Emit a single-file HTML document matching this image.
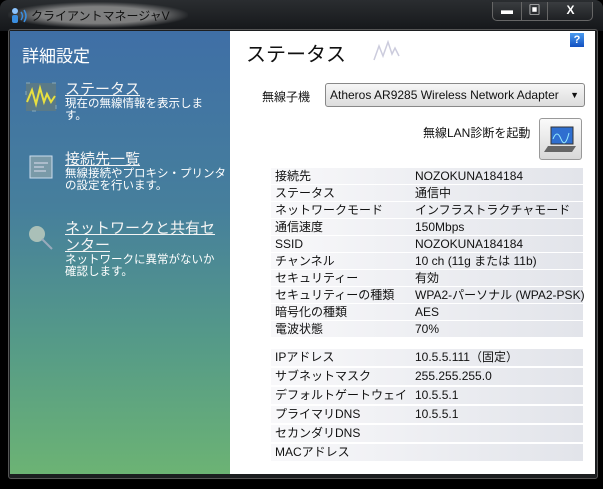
<!DOCTYPE html>
<html><head><meta charset="utf-8"><style>
*{margin:0;padding:0;box-sizing:border-box}
body{width:603px;height:489px;overflow:hidden;background:#000;font-family:"Liberation Sans","Noto Sans CJK JP",sans-serif;position:relative}
.title{position:absolute;left:0;top:0;width:603px;height:31px;background:linear-gradient(#2a2d30,#15171a);border-radius:8px 8px 0 0}
.glow{position:absolute;left:8px;top:2px;width:180px;height:26px;background:radial-gradient(ellipse at center,rgba(150,150,150,.8) 45%,rgba(80,80,80,0) 72%)}
.ttxt{position:absolute;left:31px;top:7px;font-size:12px;color:#111;white-space:nowrap}
.btns{position:absolute;left:492px;top:2px;height:19px;width:101px;border:1px solid #666;border-top:none;border-radius:0 0 5px 5px;background:linear-gradient(#3a3d40,#1e2023)}
.btns div{position:absolute;top:0;height:18px;border-right:1px solid #666;color:#fff;font-size:12px;font-weight:bold;text-align:center;line-height:17px}
.frame{position:absolute;left:8px;top:29px;width:590px;height:450px;border:1px solid #555;border-radius:3px;background:#1c1e20}
.left{position:absolute;left:10px;top:31px;width:220px;height:443px;background:linear-gradient(#3f6fa6 0%,#467f9c 40%,#559a88 70%,#6cb374 100%)}
.right{position:absolute;left:230px;top:31px;width:365px;height:443px;background:#fff}
.h1{position:absolute;color:#fff;font-size:17px;left:22px;top:42px}
.item{position:absolute;color:#fff;left:65px;font-size:11.5px;line-height:12px;white-space:nowrap}
.item .l{font-size:15px;text-decoration:underline;line-height:17px;color:#f4f4f4}
.st{position:absolute;left:246px;top:38px;font-size:20px;color:#111}
.lab{position:absolute;font-size:12px;color:#111}
.sel{position:absolute;left:325px;top:83px;width:260px;height:24px;border:1px solid #888;border-radius:3px;background:linear-gradient(#f6f6f6,#dcdcdc);font-size:12px;line-height:22px;padding-left:4px;color:#111;white-space:nowrap}
.diag{position:absolute;left:539px;top:118px;width:43px;height:42px;border:1px solid #999;border-radius:3px;background:linear-gradient(#fafafa,#d8d8d8)}
.row{position:absolute;left:271px;width:312px;height:16px;background:linear-gradient(90deg,#f8f8fa,#e2e4ea);font-size:12px;line-height:16px;color:#111;white-space:nowrap}
.row span{position:absolute}
.row .a{left:4px}.row .b{left:144px}
</style></head><body>
<div class="title"><div class="glow"></div>
<svg style="position:absolute;left:11px;top:7px" width="18" height="17"><circle cx="4" cy="4" r="3" fill="#8cc4ff"/><rect x="1" y="8" width="6" height="8" rx="2" fill="#3a8ee0"/><path d="M10 5q3 4 0 8M13 3q4 6 0 12" stroke="#3a8ee0" stroke-width="1.5" fill="none"/></svg>
<div class="ttxt">クライアントマネージャV</div>
<div class="btns"><div style="left:0;width:29px">▬</div><div style="left:29px;width:26px">▣</div><div style="left:55px;width:45px;border:none">X</div></div>
</div>
<div class="frame"></div>
<div class="left"></div>
<div class="right"></div>
<div class="h1">詳細設定</div>
<svg style="position:absolute;left:25px;top:82px" width="32" height="30"><rect x="1" y="1" width="30" height="28" fill="#5a7a88" stroke="#8ab" stroke-dasharray="4 22"/><path d="M2 20l5-12 4 14 4-16 4 14 3-8 4 8 4-6" stroke="#e8e040" stroke-width="2" fill="none"/></svg>
<div class="item" style="top:81px"><div class="l">ステータス</div>現在の無線情報を表示しま<br>す。</div>
<svg style="position:absolute;left:25px;top:153px" width="32" height="30"><rect x="5" y="3" width="22" height="22" fill="#7a9aa8" stroke="#cde"/><path d="M9 10h14M9 14h10M9 18h12" stroke="#dde" /></svg>
<div class="item" style="top:151px"><div class="l">接続先一覧</div>無線接続やプロキシ・プリンタ<br>の設定を行います。</div>
<svg style="position:absolute;left:25px;top:222px" width="32" height="32"><circle cx="12" cy="12" r="8" fill="#aac0b8"/><path d="M17 17l10 10" stroke="#9ab" stroke-width="2"/></svg>
<div class="item" style="top:220px"><div class="l">ネットワークと共有セ<br>ンター</div>ネットワークに異常がないか<br>確認します。</div>
<div class="st">ステータス</div>
<svg style="position:absolute;left:372px;top:40px" width="30" height="22"><path d="M2 20l5-14 4 10 5-14 4 12 3-6 4 8" stroke="#ccd" stroke-width="1.5" fill="none"/></svg>
<div style="position:absolute;left:570px;top:33px;width:14px;height:14px;background:linear-gradient(#4a9cf0,#1350c0);color:#fff;font-weight:bold;font-size:11px;text-align:center;line-height:14px">?</div>
<div class="lab" style="left:262px;top:88px">無線子機</div>
<div class="sel">Atheros AR9285 Wireless Network Adapter<span style="position:absolute;right:5px;font-size:9px">▼</span></div>
<div class="lab" style="left:423px;top:124px">無線LAN診断を起動</div>
<div class="diag"><svg width="43" height="42"><rect x="11" y="8" width="22" height="17" fill="#2f6fd0" stroke="#333"/><path d="M13 20q4-10 8 0t8-6" stroke="#9ef" fill="none"/><path d="M8 27h28l-4 6H4z" fill="#666"/></svg></div>
<div class="row" style="top:168px"><span class="a">接続先</span><span class="b">NOZOKUNA184184</span></div>
<div class="row" style="top:185px"><span class="a">ステータス</span><span class="b">通信中</span></div>
<div class="row" style="top:202px"><span class="a">ネットワークモード</span><span class="b">インフラストラクチャモード</span></div>
<div class="row" style="top:219px"><span class="a">通信速度</span><span class="b">150Mbps</span></div>
<div class="row" style="top:236px"><span class="a">SSID</span><span class="b">NOZOKUNA184184</span></div>
<div class="row" style="top:253px"><span class="a">チャンネル</span><span class="b">10 ch (11g または 11b)</span></div>
<div class="row" style="top:270px"><span class="a">セキュリティー</span><span class="b">有効</span></div>
<div class="row" style="top:287px"><span class="a">セキュリティーの種類</span><span class="b">WPA2-パーソナル (WPA2-PSK)</span></div>
<div class="row" style="top:304px"><span class="a">暗号化の種類</span><span class="b">AES</span></div>
<div class="row" style="top:321px"><span class="a">電波状態</span><span class="b">70%</span></div>
<div class="row" style="top:349px;height:17px;line-height:17px"><span class="a">IPアドレス</span><span class="b">10.5.5.111（固定）</span></div>
<div class="row" style="top:368px;height:17px;line-height:17px"><span class="a">サブネットマスク</span><span class="b">255.255.255.0</span></div>
<div class="row" style="top:387px;height:17px;line-height:17px"><span class="a">デフォルトゲートウェイ</span><span class="b">10.5.5.1</span></div>
<div class="row" style="top:406px;height:17px;line-height:17px"><span class="a">プライマリDNS</span><span class="b">10.5.5.1</span></div>
<div class="row" style="top:425px;height:17px;line-height:17px"><span class="a">セカンダリDNS</span><span class="b"></span></div>
<div class="row" style="top:444px;height:17px;line-height:17px"><span class="a">MACアドレス</span><span class="b"></span></div>
</body></html>
